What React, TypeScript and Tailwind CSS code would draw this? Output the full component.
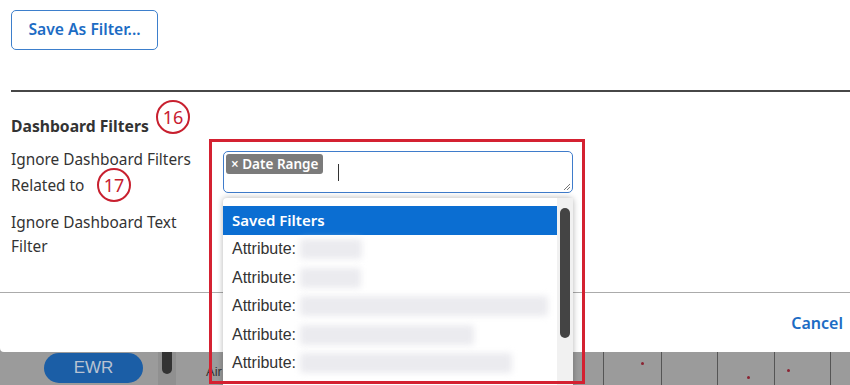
import React from "react";

const blurW = [62, 61, 248, 174, 212];

function Badge({ n, className }: { n: string; className: string }) {
  return (
    <div
      className={`absolute w-[34px] h-[34px] rounded-full border-[2.5px] border-[#c8202f] bg-white flex items-center justify-center text-[#c8202f] text-[18px] leading-none font-['Noto_Sans',sans-serif] ${className}`}
    >
      <span className="-mt-[1px]">{n}</span>
    </div>
  );
}

export default function App() {
  return (
    <div className="relative w-[850px] h-[385px] overflow-hidden bg-[#9b9b9b] font-['Noto_Sans',sans-serif]">
      {/* modal */}
      <div className="h-[352px] bg-white flex flex-col rounded-bl-[4px]">
        <div className="pl-[11px] pt-[10px]">
          <button className="w-[147px] h-[40px] border border-[#3d7fcc] rounded-[5px] text-[#1c6cc4] text-[15.7px] font-semibold">
            Save As Filter...
          </button>
        </div>
        <div className="ml-[11px] mt-[40px] h-[2px] bg-[#474747]" />
        <div className="pl-[11px] flex-1 text-[#333333]">
          <div className="mt-[24px] leading-[20px] text-[15.7px] font-bold">Dashboard Filters</div>
          <div className="mt-[11px] grid grid-cols-[212px_350px] text-[15.4px]">
            <div className="leading-[26px] w-[192px]">Ignore Dashboard Filters Related to</div>
            <div className="mt-[4px] h-[42px] border border-[#3f7ccb] rounded-[5px] relative">
              <div className="absolute left-[2px] top-[2px] h-[20px] px-[5px] bg-[#7b7b7b] rounded-[3px] text-white text-[13.5px] font-semibold leading-[20px]">
                × Date Range
              </div>
              <div className="absolute left-[114px] top-[12px] w-[1px] h-[17px] bg-[#333]" />
              <svg className="absolute right-[1px] bottom-[1px]" width="9" height="9" viewBox="0 0 9 9">
                <path d="M8 2 L2 8 M8 5 L5 8" stroke="#777" strokeWidth="1" />
              </svg>
            </div>
            <div className="mt-[12px] leading-[24px] w-[192px]">Ignore Dashboard Text Filter</div>
            <div />
          </div>
        </div>
        <div className="h-[60px] border-t border-[#ababab] flex items-center justify-end pr-[7px]">
          <span className="text-[#1c6cc4] text-[16px] font-semibold">Cancel</span>
        </div>
      </div>

      {/* background chart strip */}
      <div className="h-[33px] flex items-start relative">
        <div className="ml-[44px] mt-[1px] w-[99px] h-[30px] rounded-full bg-[#1b5ea6] flex items-center justify-center text-[#b9c3d2] text-[17px] font-['Liberation_Sans',sans-serif]">
          EWR
        </div>
        <div className="ml-[15px] w-[18px] h-[33px] bg-[#909090] flex justify-center">
          <div className="w-[10px] h-[22px] bg-[#333] rounded-b-full" />
        </div>
        <div className="ml-[30px] mt-[10px] text-[13px] text-[#333] font-['Liberation_Sans',sans-serif]">Air</div>
        <div className="absolute left-[603px] top-0 h-[33px] flex">
          <div className="relative w-[58px] h-full border-l border-[#555]">
            <div className="absolute left-[37px] top-[10px] w-[3px] h-[3px] rounded-full bg-[#8b2332]" />
          </div>
          <div className="w-[56px] h-full border-l border-[#555]" />
          <div className="relative w-[57px] h-full border-l border-[#555]">
            <div className="absolute left-[29px] top-[24px] w-[3px] h-[3px] rounded-full bg-[#8b2332]" />
          </div>
          <div className="relative w-[56px] h-full border-l border-[#555]">
            <div className="absolute left-[12px] top-[17px] w-[3px] h-[3px] rounded-full bg-[#8b2332]" />
          </div>
          <div className="w-[30px] h-full border-l border-[#555]" />
        </div>
      </div>

      {/* dropdown */}
      <div className="absolute left-[223px] top-[198px] w-[350px] h-[200px] bg-white rounded-t-[4px] shadow-[0_0_6px_rgba(0,0,0,0.3)] flex">
        <div className="w-[334px] pt-[8px]">
          <div className="h-[29px] bg-[#0b6ed2] flex items-center pl-[9px] text-white text-[15px] font-semibold">
            Saved Filters
          </div>
          {blurW.map((w, i) => (
            <div key={i} className="h-[28.5px] flex items-center pl-[9px] text-[16px] text-[#333] font-['Liberation_Sans',sans-serif]">
              <span>Attribute:</span>
              <span className="ml-[4px] h-[20px] bg-[#ebebef] blur-[3px] rounded-[3px]" style={{ width: w }} />
            </div>
          ))}
        </div>
        <div className="w-[16px] bg-[#f1f1f1] pt-[10px] flex justify-center">
          <div className="w-[10px] h-[130px] rounded-full bg-[#444]" />
        </div>
      </div>

      {/* highlight */}
      <div className="absolute left-[209px] top-[139px] w-[376px] h-[245px] border-[3px] border-[#d42131]" />

      <Badge n="16" className="left-[156px] top-[100px]" />
      <Badge n="17" className="left-[97px] top-[168px]" />
    </div>
  );
}
